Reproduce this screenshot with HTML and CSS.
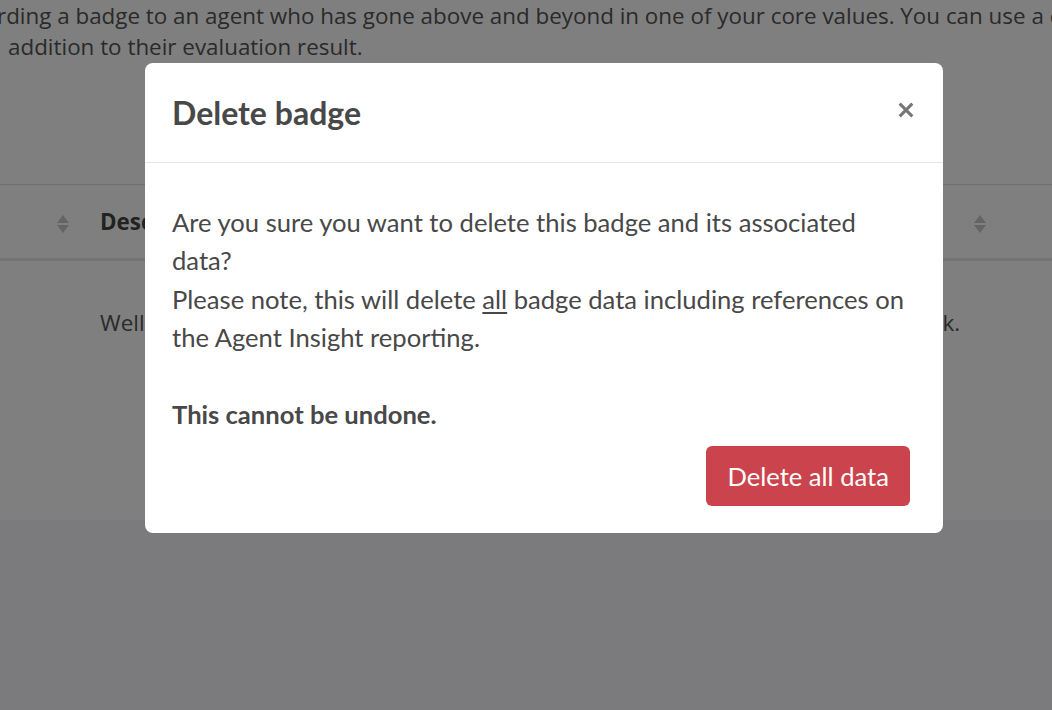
FILE: index.html
```html
<!DOCTYPE html>
<html lang="en">
<head>
    <meta charset="UTF-8">
    <meta name="viewport" content="width=device-width, initial-scale=1.0">
    <title>Badges</title>
    <link rel="stylesheet" href="styles.css">
</head>
<body>
    <div class="page">
        <div class="intro">
            <p class="intro-line first">rding a badge to an agent who has gone above and beyond in one of your core values. You can use a custom</p>
            <p class="intro-line second">addition to their evaluation result.</p>
        </div>

        <table class="badges">
            <thead>
                <tr>
                    <th class="col-sort"><span class="sort"></span></th>
                    <th class="col-desc">Description</th>
                    <th class="col-sort-right"><span class="sort"></span></th>
                </tr>
            </thead>
            <tbody>
                <tr>
                    <td></td>
                    <td class="cell-desc">Well done for going above and beyond to help customers, keep up the great work.</td>
                    <td></td>
                </tr>
            </tbody>
        </table>
    </div>

    <div class="overlay">
        <div class="modal">
            <div class="modal-header">
                <h2>Delete badge</h2>
                <button class="close" aria-label="Close">
                    <svg viewBox="0 0 20 20" width="18" height="18">
                        <path d="M3 3 L17 17 M17 3 L3 17" stroke="#777" stroke-width="3.4" fill="none"/>
                    </svg>
                </button>
            </div>
            <div class="modal-body">
                <p>Are you sure you want to delete this badge and its associated data?<br>
                Please note, this will delete <u>all</u> badge data including references on the Agent Insight reporting.</p>
                <p class="warning">This cannot be undone.</p>
            </div>
            <div class="modal-footer">
                <button class="btn-danger">Delete all data</button>
            </div>
        </div>
    </div>
</body>
</html>
```

FILE: styles.css
```css
/* page behind the dialog */
body {
    margin: 0;
    padding: 0;
    font-family: "Open Sans", sans-serif;
    background: #f6f7fa;
    color: #555;
    overflow: hidden;
}
.page {
    background: #fff;
    height: 520px;
    overflow: hidden;
}
.intro {
    height: 184px;
    overflow: hidden;
}
.intro-line {
    margin: 0;
    font-size: 22.4px;
    line-height: 31px;
    white-space: nowrap;
}
.intro-line.first {
    margin-left: -3px;
}
.intro-line.second {
    margin-left: 8px;
}
.badges {
    width: 100%;
    border-collapse: collapse;
    border-top: 1px solid #ddd;
    table-layout: fixed;
}
.badges th {
    height: 73px;
    padding: 0;
    border-bottom: 3px solid #e6e6e6;
    font-size: 22.4px;
    text-align: left;
    color: #444;
}
.badges td {
    padding: 0;
}
.badges .col-sort {
    width: 43px;
    padding-left: 57px;
}
.badges .col-sort-right {
    width: 78px;
}
.sort {
    display: inline-block;
    position: relative;
    width: 13px;
    height: 18px;
    vertical-align: middle;
}
.sort::before,
.sort::after {
    content: "";
    position: absolute;
    left: 0;
    border-left: 6.5px solid transparent;
    border-right: 6.5px solid transparent;
}
.sort::before {
    top: 0;
    border-bottom: 8px solid #c8c8c8;
}
.sort::after {
    bottom: 0;
    border-top: 8px solid #c8c8c8;
}
.badges .cell-desc {
    padding-top: 46px;
    font-size: 22.4px;
    word-spacing: 0.35px;
    white-space: nowrap;
}

/* dialog */
.overlay {
    position: fixed;
    inset: 0;
    background: rgba(0, 0, 0, 0.5);
    padding: 63px 0 0 145px;
}
.modal {
    width: 798px;
    background: #fff;
    border-radius: 8px;
    font-family: Lato, sans-serif;
    color: #484848;
}
.modal-header {
    height: 100px;
    box-sizing: border-box;
    padding: 0 27px;
    border-bottom: 1px solid #e5e5e5;
    display: flex;
    align-items: center;
    justify-content: space-between;
}
.modal-header h2 {
    margin: 0;
    font-size: 32px;
    font-weight: 700;
    color: #484848;
}
.close {
    border: none;
    background: none;
    padding: 0;
    margin: 0 1px 6px 0;
    display: flex;
    cursor: pointer;
}
.modal-body {
    padding: 40px 27px 0;
    font-size: 25.6px;
    line-height: 38.4px;
}
.modal-body p {
    margin: 0;
}
.modal-body u {
    text-underline-offset: 3px;
}
.modal-body .warning {
    margin-top: 38.4px;
    font-weight: 700;
}
.modal-footer {
    display: flex;
    justify-content: flex-end;
    padding: 13px 33px 27px;
}
.btn-danger {
    height: 60px;
    padding: 0 21px;
    border: none;
    border-radius: 6px;
    background: #cb444d;
    color: #fff;
    font-family: Lato, sans-serif;
    font-size: 25.6px;
    cursor: pointer;
}
```
